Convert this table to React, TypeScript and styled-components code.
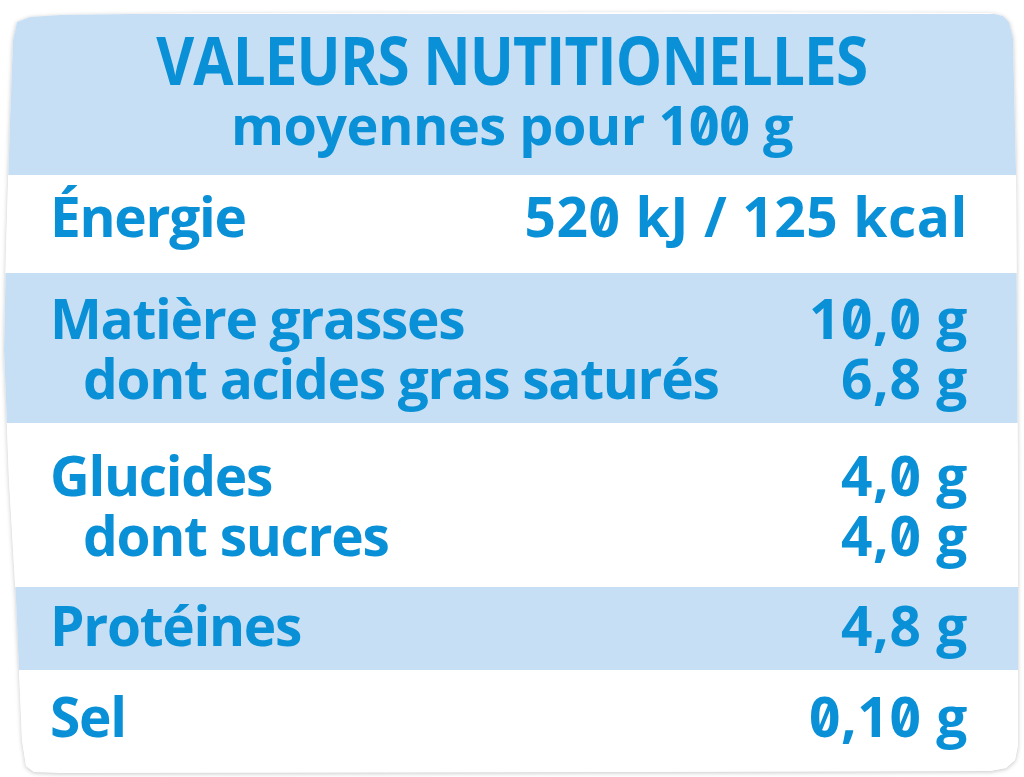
import React from "react";
import styled, { createGlobalStyle } from "styled-components";

const GlobalStyle = createGlobalStyle`
  html, body {
    margin: 0;
    padding: 0;
    background: #ffffff;
  }
  body {
    font-family: "Open Sans", "DejaVu Sans", sans-serif;
  }
`;

const BLUE = "#0990d6";
const PALE = "#c7dff4";

type Row = {
  label: string;
  value: string;
  sub?: { label: string; value: string };
  shaded: boolean;
  height: number;
  pt: number;
};

const rows: Row[] = [
  { label: "Énergie", value: "520 kJ / 125 kcal", shaded: false, height: 98, pt: 11 },
  {
    label: "Matière grasses",
    value: "10,0 g",
    sub: { label: "dont acides gras saturés", value: "6,8 g" },
    shaded: true,
    height: 150,
    pt: 15,
  },
  {
    label: "Glucides",
    value: "4,0 g",
    sub: { label: "dont sucres", value: "4,0 g" },
    shaded: false,
    height: 164,
    pt: 22,
  },
  { label: "Protéines", value: "4,8 g", shaded: true, height: 83, pt: 8 },
  { label: "Sel", value: "0,10 g", shaded: false, height: 102, pt: 16 },
];

const Page = styled.div`
  width: 1024px;
  height: 777px;
  filter: drop-shadow(0 1px 2px rgba(0, 0, 0, 0.22));
`;

const Sheet = styled.div`
  width: 1024px;
  height: 777px;
  box-sizing: border-box;
  padding-top: 14px;
  background: #ffffff;
  color: ${BLUE};
  display: flex;
  flex-direction: column;
  clip-path: polygon(
    17px 22px, 30px 17px, 60px 15px, 200px 13px, 700px 12px, 990px 13px,
    1003px 16px, 1009px 22px, 1013px 38px, 1016px 170px, 1018px 500px,
    1018px 745px, 1015px 760px, 1006px 768px, 990px 771px, 600px 772px,
    60px 773px, 34px 772px, 26px 766px, 22px 740px, 16px 600px, 9px 480px,
    4px 350px, 6px 250px, 10px 120px, 13px 40px
  );
`;

const Header = styled.header`
  background: ${PALE};
  padding: 12px 0 20px;
  display: flex;
  flex-direction: column;
  align-items: center;
`;

const Title = styled.h1`
  margin: 0;
  font-size: 66px;
  line-height: 67px;
  font-weight: 700;
  letter-spacing: -1px;
  transform: scaleX(0.885);
  white-space: nowrap;
`;

const Subtitle = styled.h2`
  margin: 0;
  font-size: 54px;
  line-height: 62px;
  font-weight: 700;
  letter-spacing: -0.5px;
  white-space: nowrap;
`;

const Band = styled.section<{ $shaded: boolean; $height: number; $pt: number }>`
  background: ${(p) => (p.$shaded ? PALE : "#ffffff")};
  height: ${(p) => p.$height}px;
  box-sizing: border-box;
  padding: ${(p) => p.$pt}px 56px 0 50px;
  display: flex;
  flex-direction: column;
`;

const Line = styled.div<{ $indent?: boolean }>`
  display: flex;
  justify-content: space-between;
  align-items: baseline;
  padding-left: ${(p) => (p.$indent ? 33 : 0)}px;
  font-size: 55px;
  line-height: 60px;
  font-weight: 700;
  white-space: nowrap;
`;

const Label = styled.span`
  letter-spacing: -1.3px;
`;

const Value = styled.span`
  letter-spacing: 0.6px;
`;

const Zero = styled.span`
  position: relative;
  display: inline-block;
  line-height: 0.8em;

  &::after {
    content: "";
    position: absolute;
    left: 50%;
    top: 0.11em;
    width: 0.075em;
    height: 0.64em;
    margin-left: -0.0375em;
    border-radius: 0.04em;
    background: currentColor;
    transform: rotate(22deg);
  }
`;

const slashed = (text: string) =>
  text.split("0").flatMap((part, i) =>
    i === 0 ? [part] : [<Zero key={i}>0</Zero>, part]
  );

export default function App() {
  return (
    <>
      <GlobalStyle />
      <Page>
        <Sheet>
          <Header>
            <Title>VALEURS NUTITIONELLES</Title>
            <Subtitle>moyennes pour {slashed("100")} g</Subtitle>
          </Header>
          {rows.map((row) => (
            <Band key={row.label} $shaded={row.shaded} $height={row.height} $pt={row.pt}>
              <Line>
                <Label>{row.label}</Label>
                <Value>{slashed(row.value)}</Value>
              </Line>
              {row.sub && (
                <Line $indent>
                  <Label>{row.sub.label}</Label>
                  <Value>{slashed(row.sub.value)}</Value>
                </Line>
              )}
            </Band>
          ))}
        </Sheet>
      </Page>
    </>
  );
}
